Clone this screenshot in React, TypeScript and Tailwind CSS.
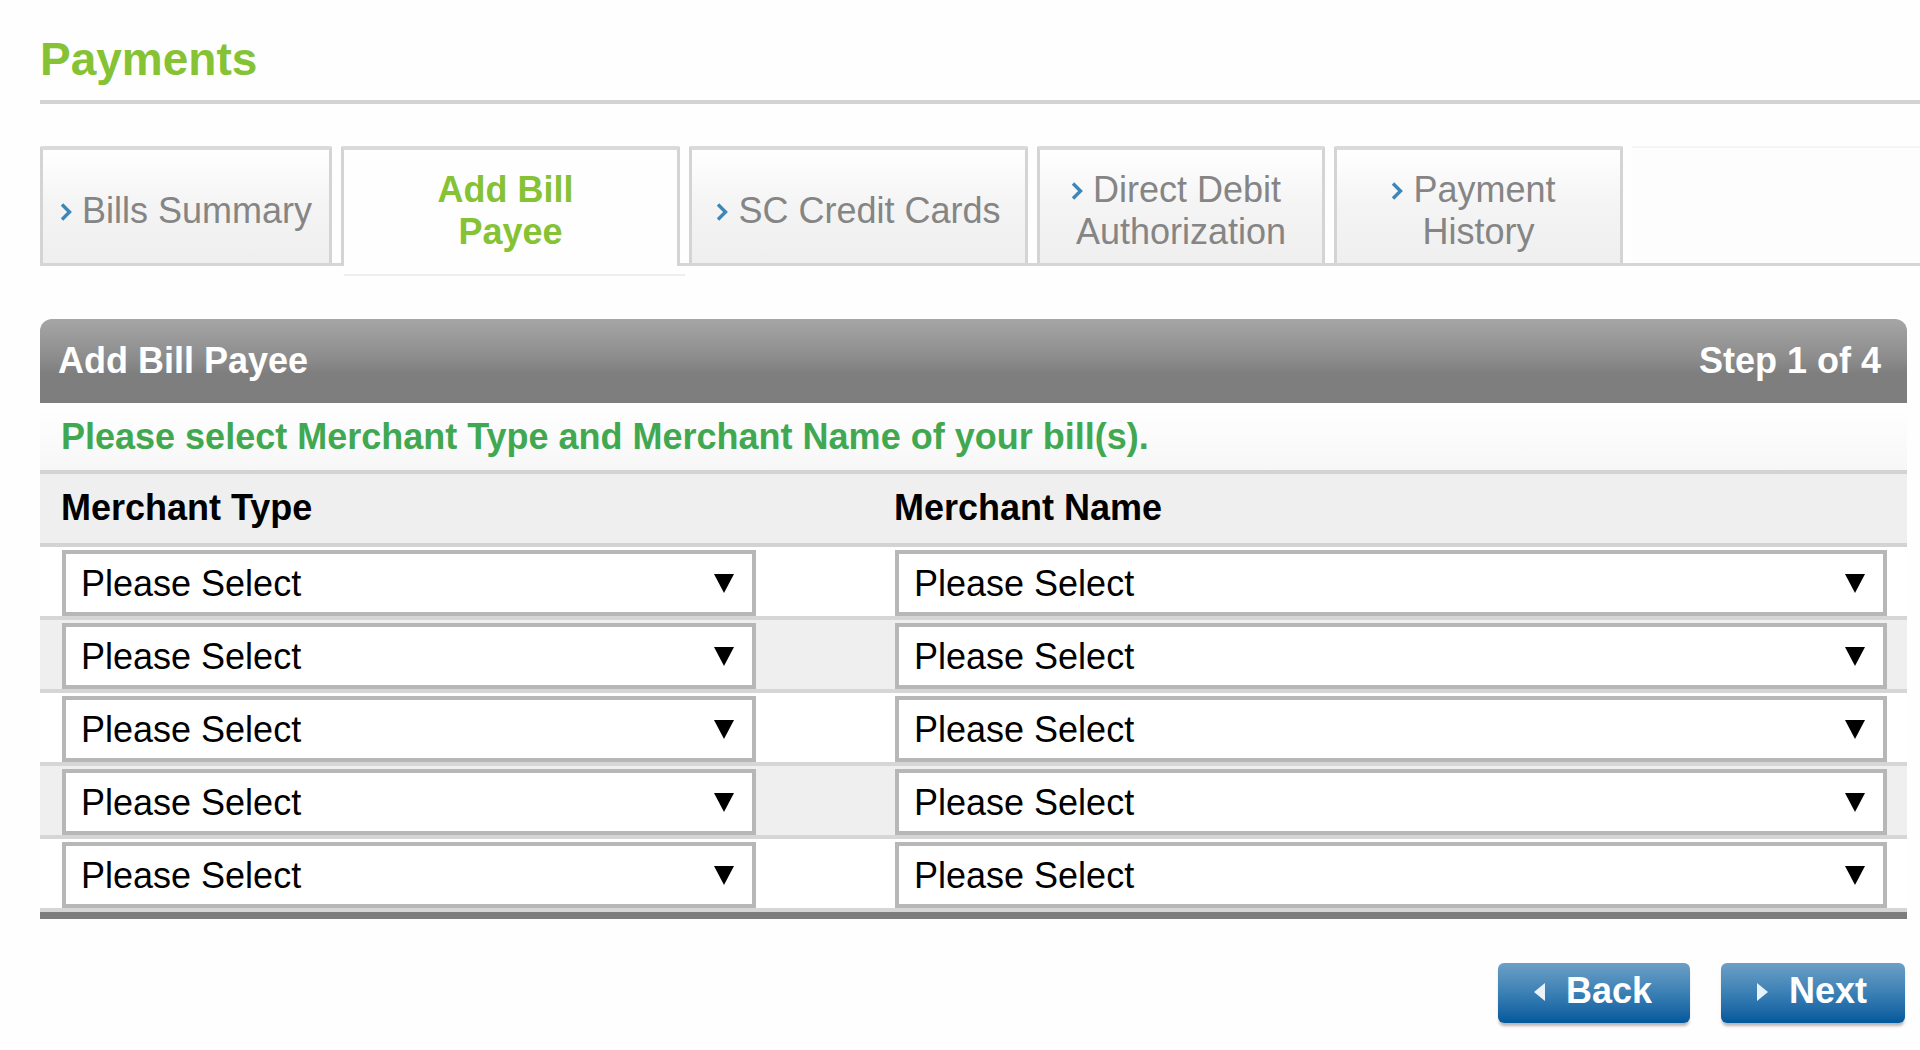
import { useState } from 'react'
import { clsx } from 'clsx'

type Tab = { id: string; lines: string[]; width: string }

const tabs: Tab[] = [
  { id: 'summary', lines: ['Bills Summary'], width: 'w-[292px]' },
  { id: 'add', lines: ['Add Bill', 'Payee'], width: 'w-[339px]' },
  { id: 'cards', lines: ['SC Credit Cards'], width: 'w-[339px]' },
  { id: 'debit', lines: ['Direct Debit', 'Authorization'], width: 'w-[288px]' },
  { id: 'history', lines: ['Payment', 'History'], width: 'w-[289px]' },
]

const rows = [1, 2, 3, 4, 5]

function Chevron() {
  return (
    <svg viewBox="0 0 12 18" className="inline-block w-3 h-[18px] mr-[10px] align-[2px]" aria-hidden="true">
      <path d="M2 1.5 L9.5 9 L2 16.5" fill="none" stroke="#3a87b8" strokeWidth="3.4" />
    </svg>
  )
}

function TabLink({ tab, active, onSelect }: { tab: Tab; active: boolean; onSelect: () => void }) {
  return (
    <a
      href={`#${tab.id}`}
      onClick={onSelect}
      aria-current={active ? 'page' : undefined}
      className={clsx(
        'relative shrink-0 flex items-center justify-center text-center pt-2',
        'border-t-4 border-x-[3px] border-t-[#dadada] border-x-[#d4d4d4] rounded-t-xs',
        tab.width,
        active
          ? '-mb-[3px] pb-[3px] bg-[#fefefe] font-bold text-[#85c234]'
          : 'bg-linear-to-b from-white via-[#f4f4f4] to-[#efefef] text-[#858585]',
      )}
    >
      <span>
        {!active && <Chevron />}
        {tab.lines[0]}
        {tab.lines[1] && (
          <>
            &nbsp;
            <br />
            {tab.lines[1]}
          </>
        )}
      </span>
      {active && <span className="absolute left-0 -right-2 top-full mt-2 h-0.5 bg-[#eeeeee]" />}
    </a>
  )
}

function MerchantSelect({ label }: { label: string }) {
  return (
    <div className="relative">
      <select
        aria-label={label}
        className="block w-full h-[66px] appearance-none border-4 border-[#b7b7b7] bg-white pt-0.5 pl-[15px] pr-14 text-black"
      >
        <option>Please Select</option>
      </select>
      <svg
        viewBox="0 0 20 19"
        className="absolute right-[22px] top-6 w-5 h-[19px] pointer-events-none"
        aria-hidden="true"
      >
        <path d="M0 0 H20 L10 19 Z" fill="#000" />
      </svg>
    </div>
  )
}

function NavButton({ label, direction }: { label: string; direction: 'left' | 'right' }) {
  return (
    <button
      type="button"
      className="flex items-center h-[60px] pl-9 pr-[38px] pb-1 gap-5 rounded-md bg-linear-to-b from-[#6c9fc5] via-[#3a80b5] to-[#00589b] font-bold text-white shadow-[0_4px_3px_-1px_#b9b4b8]"
    >
      <svg viewBox="0 0 12 18" className="w-3 h-[18px] mt-0.5" aria-hidden="true">
        <path d={direction === 'left' ? 'M11 0 V18 L0 9 Z' : 'M0 0 V18 L11 9 Z'} fill="#e9f2f8" />
      </svg>
      {label}
    </button>
  )
}

export default function App() {
  const [activeTab, setActiveTab] = useState('add')

  return (
    <main className="min-h-screen bg-[#fefefe] pt-[31px] pl-10 font-['Liberation_Sans',Arial,sans-serif] text-[36px] leading-[42px]">
      <h1 className="pb-[13px] border-b-4 border-[#d3d3d3] text-[46px] leading-[56px] font-bold text-[#85c234]">
        Payments
      </h1>

      <nav className="flex gap-[9px] h-[120px] mt-[42px] border-b-[3px] border-[#d6d6d6]">
        {tabs.map((tab) => (
          <TabLink
            key={tab.id}
            tab={tab}
            active={tab.id === activeTab}
            onSelect={() => setActiveTab(tab.id)}
          />
        ))}
        <div className="flex-1 border-t-2 border-[#f5f5f8] bg-[#fdfdfd]" />
      </nav>

      <section className="mt-[53px] mr-[13px] border-b-[7px] border-[#7d7d7d]">
        <header className="flex items-center justify-between h-[84px] pl-[18px] pr-[26px] rounded-t-xl bg-linear-to-b from-[#a6a6a6] via-[#8a8a8a] via-50% to-[#7e7e7e] to-65% font-bold text-white">
          <h2>Add Bill Payee</h2>
          <p>Step 1 of 4</p>
        </header>
        <p className="pt-[13px] pb-3 pl-[21px] border-b-4 border-[#d3d3d3] bg-linear-to-b from-white to-[#f7f7f7] font-bold text-[#41a852]">
          Please select Merchant Type and Merchant Name of your bill(s).
        </p>

        <table className="w-full table-fixed border-separate border-spacing-0">
          <thead>
            <tr className="bg-[#efefef] text-left text-black">
              <th scope="col" className="w-[833px] pt-[13px] pb-[14px] pl-[21px] border-b-4 border-[#d3d3d3]">
                Merchant Type
              </th>
              <th scope="col" className="pt-[13px] pb-[14px] pl-[21px] border-b-4 border-[#d3d3d3]">
                Merchant Name
              </th>
            </tr>
          </thead>
          <tbody>
            {rows.map((row) => (
              <tr key={row} className="bg-white even:bg-[#efefef]">
                <td className="pt-[3px] pl-[22px] pr-[117px] border-b-4 border-[#d6d6d6]">
                  <MerchantSelect label={`Merchant Type ${row}`} />
                </td>
                <td className="pt-[3px] pl-[22px] pr-5 border-b-4 border-[#d6d6d6]">
                  <MerchantSelect label={`Merchant Name ${row}`} />
                </td>
              </tr>
            ))}
          </tbody>
        </table>
      </section>

      <div className="flex justify-end gap-[31px] mt-11 mr-[15px]">
        <NavButton label="Back" direction="left" />
        <NavButton label="Next" direction="right" />
      </div>
    </main>
  )
}
